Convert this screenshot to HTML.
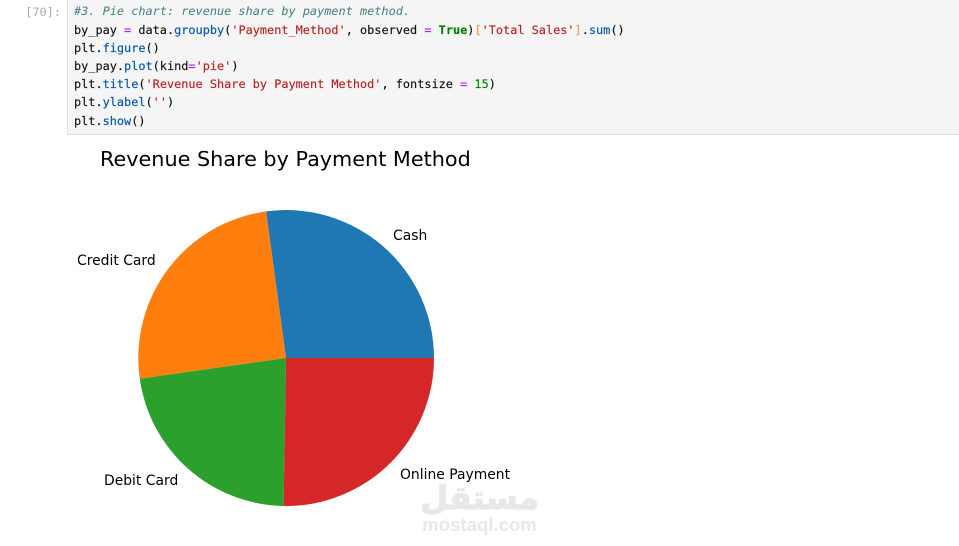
<!DOCTYPE html>
<html><head><meta charset="utf-8">
<style>
html,body{margin:0;padding:0;background:#fff;width:959px;height:546px;overflow:hidden}
.prompt{position:absolute;left:0;top:3px;width:61px;text-align:right;font:11.9px/18.2px "DejaVu Sans Mono",monospace;color:#aaa}
.cell{position:absolute;left:67px;top:0;width:892px;height:134px;background:#f5f5f5;border-left:1px solid #e0e0e0;border-bottom:1px solid #e0e0e0}
pre{position:absolute;left:6px;top:2.35px;margin:0;font:11.88px/18.2px "DejaVu Sans Mono",monospace;color:#111;-webkit-text-stroke:.15px currentColor}
.c{color:#408080;font-style:italic;-webkit-text-stroke:0}.s{color:#ba2121}.o{color:#aa22ff}.f{color:#0055aa}.k{color:#008000;font-weight:bold}.n{color:#008000}.b{color:#e0a050}
svg{position:absolute;left:0;top:0}
</style></head><body>
<div class="prompt">[70]:</div>
<div class="cell"><pre><span class="c">#3. Pie chart: revenue share by payment method.</span>
by_pay <span class="o">=</span> data.<span class="f">groupby</span>(<span class="s">'Payment_Method'</span>, observed <span class="o">=</span> <span class="k">True</span>)<span class="b">[</span><span class="s">'Total Sales'</span><span class="b">]</span>.<span class="f">sum</span>()
plt.<span class="f">figure</span>()
by_pay.<span class="f">plot</span>(kind<span class="o">=</span><span class="s">'pie'</span>)
plt.<span class="f">title</span>(<span class="s">'Revenue Share by Payment Method'</span>, fontsize <span class="o">=</span> <span class="n">15</span>)
plt.<span class="f">ylabel</span>(<span class="s">''</span>)
plt.<span class="f">show</span>()</pre></div>
<svg width="959" height="546" viewBox="0 0 959 546" font-family="'DejaVu Sans',sans-serif">
<path d="M286 358L434 358A148 148 0 0 0 266 211.4Z" fill="#1f77b4"/>
<path d="M286 358L266 211.4A148 148 0 0 0 139.8 378.8Z" fill="#ff7f0e"/>
<path d="M286 358L139.8 378.8A148 148 0 0 0 283.6 506Z" fill="#2ca02c"/>
<path d="M286 358L283.6 506A148 148 0 0 0 434 358Z" fill="#d62728"/>
<text x="100" y="166" font-size="20.75" fill="#000">Revenue Share by Payment Method</text>
<text x="393" y="240" font-size="13.9" fill="#000">Cash</text>
<text x="77" y="265" font-size="13.9" fill="#000">Credit Card</text>
<text x="104" y="485" font-size="13.9" fill="#000">Debit Card</text>
<text x="400" y="479" font-size="13.9" fill="#000">Online Payment</text>
<text x="479.5" y="509" font-size="32.5" font-weight="bold" fill="#e8e8e8" stroke="#e8e8e8" stroke-width="1.2" text-anchor="middle" direction="rtl">مستقل</text>
<text x="479.5" y="531" font-size="18.6" font-weight="bold" fill="#e8e8e8" text-anchor="middle" font-family="'Liberation Sans',sans-serif">mostaql.com</text>
</svg>
</body></html>
